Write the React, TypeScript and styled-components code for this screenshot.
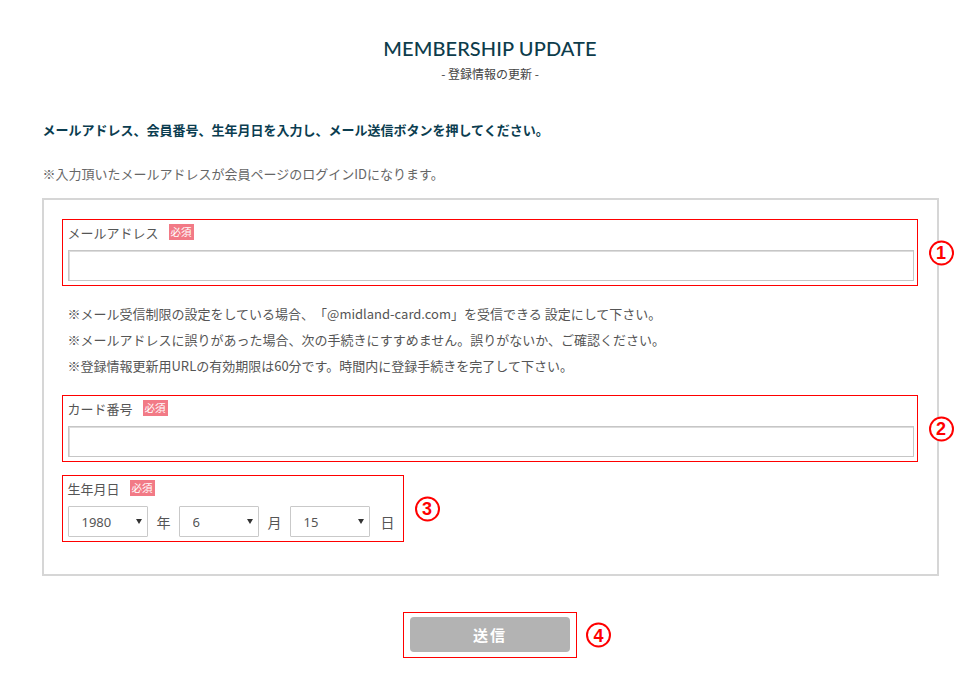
import React from "react";
import styled, { createGlobalStyle } from "styled-components";

const GlobalStyle = createGlobalStyle`
  html, body {
    margin: 0;
    padding: 0;
    background: #fff;
  }
  body {
    font-family: "Noto Sans CJK JP", "Noto Sans", sans-serif;
    color: #555;
    text-spacing-trim: space-all;
  }
`;

const Page = styled.div`
  width: 897px;
  margin: 0 auto;
  padding-top: 36px;
`;

const Header = styled.header`
  text-align: center;
`;

const Title = styled.h1`
  margin: 0;
  font-family: "Lato", "Liberation Sans", sans-serif;
  font-weight: 500;
  font-size: 20px;
  line-height: 24px;
  letter-spacing: 0.1px;
  color: #0d3c4b;
`;

const SubTitle = styled.p`
  margin: 6px 0 0;
  font-size: 12px;
  line-height: 16px;
  color: #444;
`;

const Lead = styled.p`
  margin: 38px 0 0 1px;
  font-size: 13px;
  font-weight: 700;
  line-height: 20px;
  color: #0b3d50;
`;

const Caution = styled.p`
  margin: 24px 0 0 1px;
  font-size: 13px;
  line-height: 20px;
  color: #666;
`;

const FormBox = styled.form`
  margin-top: 14px;
  border: 2px solid #d6d6d6;
  padding: 19px 19px 32px 18px;
`;

const Field = styled.div<{ $fit?: boolean }>`
  position: relative;
  border: 1px solid #f00;
  padding: 4px 3px 4px 5px;
  width: ${(p) => (p.$fit ? "fit-content" : "auto")};
  padding-right: ${(p) => (p.$fit ? "8px" : "3px")};
`;

const LabelRow = styled.div`
  display: flex;
  align-items: center;
  gap: 10px;
  height: 16px;
  font-size: 13px;
  color: #555;
`;

const Required = styled.span`
  display: inline-flex;
  align-items: center;
  justify-content: center;
  flex: none;
  width: 25px;
  height: 16px;
  background: #f27a86;
  color: #fff;
  font-size: 10.5px;
  line-height: 1;
`;

const TextInput = styled.input`
  display: block;
  box-sizing: border-box;
  width: 100%;
  height: 31px;
  margin-top: 10px;
  border: 1px solid #c6c6c6;
  box-shadow: inset 1px 1px 0 #dcdcdc;
  background: #fff;
  outline: none;
  padding: 0 10px;
  font-family: inherit;
  font-size: 13px;
`;

const Notes = styled.ul`
  list-style: none;
  margin: 15px 0 16px;
  padding: 0 0 0 6px;
  font-size: 13px;
  line-height: 26px;
  color: #555;
`;

const Spacer = styled.div`
  height: 13px;
`;

const DateRow = styled.div`
  display: flex;
  align-items: center;
  margin-top: 10px;
`;

const SelectWrap = styled.div`
  position: relative;
  width: 80px;
  height: 31px;
  &::after {
    content: "";
    position: absolute;
    right: 6px;
    top: 13px;
    border-left: 3px solid transparent;
    border-right: 3px solid transparent;
    border-top: 5px solid #333;
    pointer-events: none;
  }
`;

const Select = styled.select`
  appearance: none;
  -webkit-appearance: none;
  box-sizing: border-box;
  width: 100%;
  height: 100%;
  border: 1px solid #c9c9c9;
  border-radius: 1px;
  background: #fff;
  padding: 0 0 0 13px;
  font-family: "Noto Sans", "Noto Sans CJK JP", sans-serif;
  font-size: 13px;
  color: #555;
  outline: none;
`;

const Unit = styled.span`
  font-size: 14px;
  color: #555;
  padding: 0 8px 0 9px;
  &:last-child {
    padding: 0 0 0 11px;
  }
`;

const Mark = styled.span<{ $gap?: number }>`
  position: absolute;
  left: calc(100% + ${(p) => p.$gap ?? 12}px);
  top: 50%;
  transform: translateY(-50%);
  box-sizing: border-box;
  width: 25px;
  height: 25px;
  border: 2px solid #f00;
  border-radius: 50%;
  background: #fff;
  display: flex;
  align-items: center;
  justify-content: center;
  font-family: "Liberation Sans", "Noto Sans", sans-serif;
  font-weight: 700;
  font-size: 18px;
  line-height: 1;
  color: #f00;
`;

const Footer = styled.div`
  display: flex;
  justify-content: center;
  margin-top: 36px;
`;

const SubmitFrame = styled.div`
  position: relative;
  border: 1px solid #f00;
  padding: 4px 6px 5px 6px;
`;

const SubmitButton = styled.button`
  display: block;
  width: 160px;
  height: 35px;
  border: none;
  border-radius: 4px;
  background: #b3b3b3;
  color: #fff;
  font-family: "Noto Sans CJK JP", sans-serif;
  font-weight: 700;
  font-size: 15px;
  letter-spacing: 2px;
  cursor: pointer;
`;

const years = Array.from({ length: 80 }, (_, i) => 1940 + i);
const months = Array.from({ length: 12 }, (_, i) => i + 1);
const days = Array.from({ length: 31 }, (_, i) => i + 1);

const notes = [
  "※メール受信制限の設定をしている場合、「@midland-card.com」を受信できる 設定にして下さい。",
  "※メールアドレスに誤りがあった場合、次の手続きにすすめません。誤りがないか、ご確認ください。",
  "※登録情報更新用URLの有効期限は60分です。時間内に登録手続きを完了して下さい。",
];

const App: React.FC = () => {
  return (
    <>
      <GlobalStyle />
      <Page>
        <Header>
          <Title>MEMBERSHIP UPDATE</Title>
          <SubTitle>- 登録情報の更新 -</SubTitle>
        </Header>

        <Lead>メールアドレス、会員番号、生年月日を入力し、メール送信ボタンを押してください。</Lead>
        <Caution>※入力頂いたメールアドレスが会員ページのログインIDになります。</Caution>

        <FormBox onSubmit={(e) => e.preventDefault()}>
          <Field>
            <LabelRow>
              メールアドレス<Required>必須</Required>
            </LabelRow>
            <TextInput type="email" />
            <Mark>1</Mark>
          </Field>

          <Notes>
            {notes.map((n) => (
              <li key={n}>{n}</li>
            ))}
          </Notes>

          <Field>
            <LabelRow>
              カード番号<Required>必須</Required>
            </LabelRow>
            <TextInput type="text" />
            <Mark>2</Mark>
          </Field>

          <Spacer />

          <Field $fit>
            <LabelRow>
              生年月日<Required>必須</Required>
            </LabelRow>
            <DateRow>
              <SelectWrap>
                <Select defaultValue={1980}>
                  {years.map((y) => (
                    <option key={y} value={y}>
                      {y}
                    </option>
                  ))}
                </Select>
              </SelectWrap>
              <Unit>年</Unit>
              <SelectWrap>
                <Select defaultValue={6}>
                  {months.map((m) => (
                    <option key={m} value={m}>
                      {m}
                    </option>
                  ))}
                </Select>
              </SelectWrap>
              <Unit>月</Unit>
              <SelectWrap>
                <Select defaultValue={15}>
                  {days.map((d) => (
                    <option key={d} value={d}>
                      {d}
                    </option>
                  ))}
                </Select>
              </SelectWrap>
              <Unit>日</Unit>
            </DateRow>
            <Mark>3</Mark>
          </Field>
        </FormBox>

        <Footer>
          <SubmitFrame>
            <SubmitButton type="button">送信</SubmitButton>
            <Mark $gap={10}>4</Mark>
          </SubmitFrame>
        </Footer>
      </Page>
    </>
  );
};

export default App;
